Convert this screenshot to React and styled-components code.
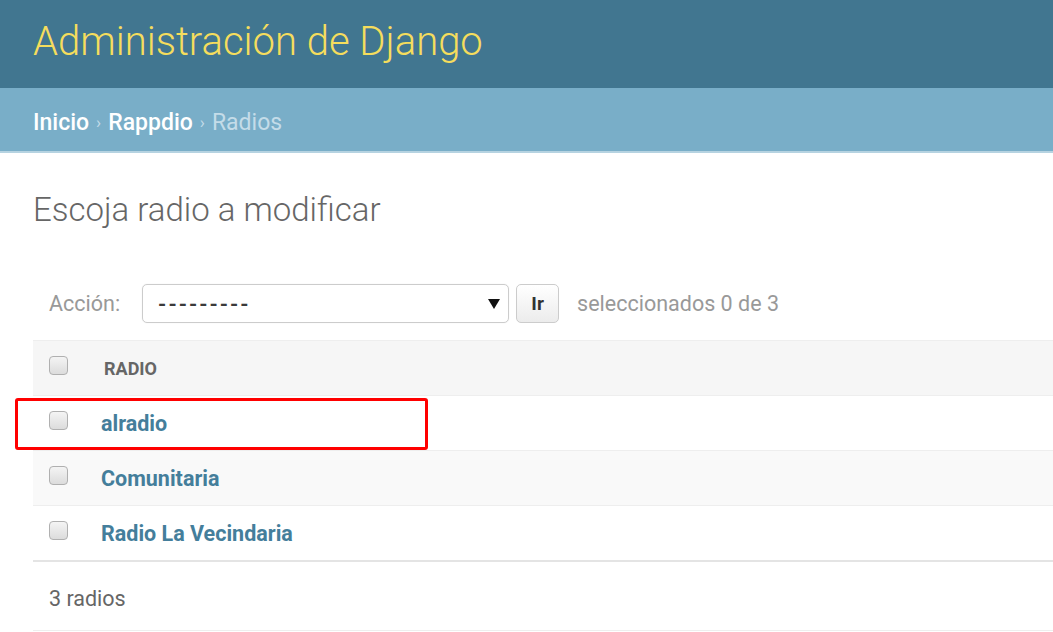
import styled, { createGlobalStyle } from 'styled-components';

const Global = createGlobalStyle`
  body {
    margin: 0;
    background: #ffffff;
    font-family: Roboto, 'Liberation Sans', sans-serif;
    overflow: hidden;
  }
`;

const radios = [
  { name: 'alradio', marked: true },
  { name: 'Comunitaria' },
  { name: 'Radio La Vecindaria' },
];

const App = () => {
  return (
    <Page>
      <Global />
      <Header>
        <Branding>Administración de Django</Branding>
      </Header>
      <Breadcrumbs>
        <Crumb href="#">Inicio</Crumb>
        <Sep>›</Sep>
        <Crumb href="#">Rappdio</Crumb>
        <Sep>›</Sep>
        <Current>Radios</Current>
      </Breadcrumbs>
      <Content>
        <Title>Escoja radio a modificar</Title>
        <Actions>
          <Label>Acción:</Label>
          <Select>
            <Dashes>---------</Dashes>
            <Arrow />
          </Select>
          <GoButton>Ir</GoButton>
          <Counter>seleccionados 0 de 3</Counter>
        </Actions>
        <Table>
          <HeadRow>
            <CheckCell><Check /></CheckCell>
            <HeadCell>RADIO</HeadCell>
          </HeadRow>
          {radios.map((r, i) => (
            <Row key={r.name} odd={i % 2 === 1} last={i === radios.length - 1}>
              {r.marked && <Marker />}
              <CheckCell><Check /></CheckCell>
              <NameCell href="#">{r.name}</NameCell>
            </Row>
          ))}
        </Table>
        <Paginator>3 radios</Paginator>
      </Content>
    </Page>
  );
};

const Page = styled.div`
  width: 1053px;
  height: 632px;
  overflow: hidden;
`;

const Header = styled.div`
  height: 88px;
  background: #417690;
  display: flex;
  align-items: center;
  padding: 0 33px;
  box-sizing: border-box;
`;

const Branding = styled.h1`
  margin: 0;
  margin-top: -6px;
  font-weight: 300;
  font-size: 40px;
  color: #f5dd5d;
`;

const Breadcrumbs = styled.div`
  height: 65px;
  background: #79aec8;
  border-bottom: 2px solid #b6d3e1;
  box-sizing: border-box;
  display: flex;
  align-items: center;
  padding: 5px 33px 0;
  font-size: 23px;
  color: #c4dce8;
`;

const Crumb = styled.a`
  color: #ffffff;
  font-weight: 500;
  text-decoration: none;
`;

const Sep = styled.span`
  margin: 0 7px;
  font-size: 17px;
  color: #c4dce8;
`;

const Current = styled.span`
  color: #c4dce8;
`;

const Content = styled.div`
  padding: 37px 0 0 33px;
`;

const Title = styled.h2`
  margin: 0 0 55px;
  font-weight: 300;
  font-size: 33px;
  color: #666666;
`;

const Actions = styled.div`
  display: flex;
  align-items: center;
  height: 39px;
  padding: 0 0 18px 16px;
  font-size: 21.5px;
  color: #999999;
`;

const Label = styled.span`
  margin-right: 22px;
`;

const Select = styled.div`
  width: 367px;
  height: 39px;
  box-sizing: border-box;
  border: 1px solid #cccccc;
  border-radius: 5px;
  box-shadow: 0 0 1px #dddddd;
  display: flex;
  align-items: center;
  justify-content: space-between;
  padding: 0 8px 0 15px;
  color: #333333;
`;

const Dashes = styled.span`
  font-size: 21px;
  font-weight: 700;
  letter-spacing: 2px;
  color: #3a3a3a;
`;

const Arrow = styled.span`
  width: 0;
  height: 0;
  border-left: 6px solid transparent;
  border-right: 6px solid transparent;
  border-top: 10px solid #111111;
  margin-top: 1px;
`;

const GoButton = styled.div`
  width: 43px;
  height: 39px;
  margin-left: 7px;
  box-sizing: border-box;
  border: 1px solid #cccccc;
  border-radius: 5px;
  background: linear-gradient(#ffffff, #ececec);
  display: flex;
  align-items: center;
  justify-content: center;
  color: #333333;
  font-size: 19px;
  font-weight: 700;
`;

const Counter = styled.span`
  margin-left: 18px;
`;

const Table = styled.div`
  display: flex;
  flex-direction: column;
`;

const HeadRow = styled.div`
  height: 54px;
  background: #f6f6f6;
  display: flex;
  align-items: center;
  border-top: 1px solid #eeeeee;
  border-bottom: 1px solid #eeeeee;
  margin-top: -1px;
`;

const Row = styled.div`
  position: relative;
  height: 54px;
  display: flex;
  align-items: center;
  background: ${p => (p.odd ? '#f9f9f9' : '#ffffff')};
  border-bottom: ${p => (p.last ? '2px solid #e4e4e4' : '1px solid #eeeeee')};
`;

const Marker = styled.div`
  position: absolute;
  left: -18px;
  top: 2px;
  width: 413px;
  height: 52px;
  box-sizing: border-box;
  border: 3px solid #ff0000;
  border-radius: 3px;
`;

const CheckCell = styled.div`
  width: 68px;
  padding-left: 16px;
  box-sizing: border-box;
  display: flex;
  align-items: center;
  margin-top: -5px;
`;

const Check = styled.span`
  width: 19px;
  height: 19px;
  box-sizing: border-box;
  border: 1px solid #b0b0b0;
  border-radius: 4px;
  background: linear-gradient(#f4f4f4, #dcdcdc);
`;

const HeadCell = styled.span`
  margin-left: 3px;
  font-size: 18px;
  font-weight: 700;
  color: #666666;
`;

const NameCell = styled.a`
  font-size: 21.5px;
  font-weight: 700;
  color: #447e9b;
  text-decoration: none;
`;

const Paginator = styled.div`
  height: 64px;
  padding: 4px 0 0 16px;
  display: flex;
  align-items: center;
  font-size: 21.5px;
  color: #666666;
  border-bottom: 1px solid #eeeeee;
`;

export default App;
